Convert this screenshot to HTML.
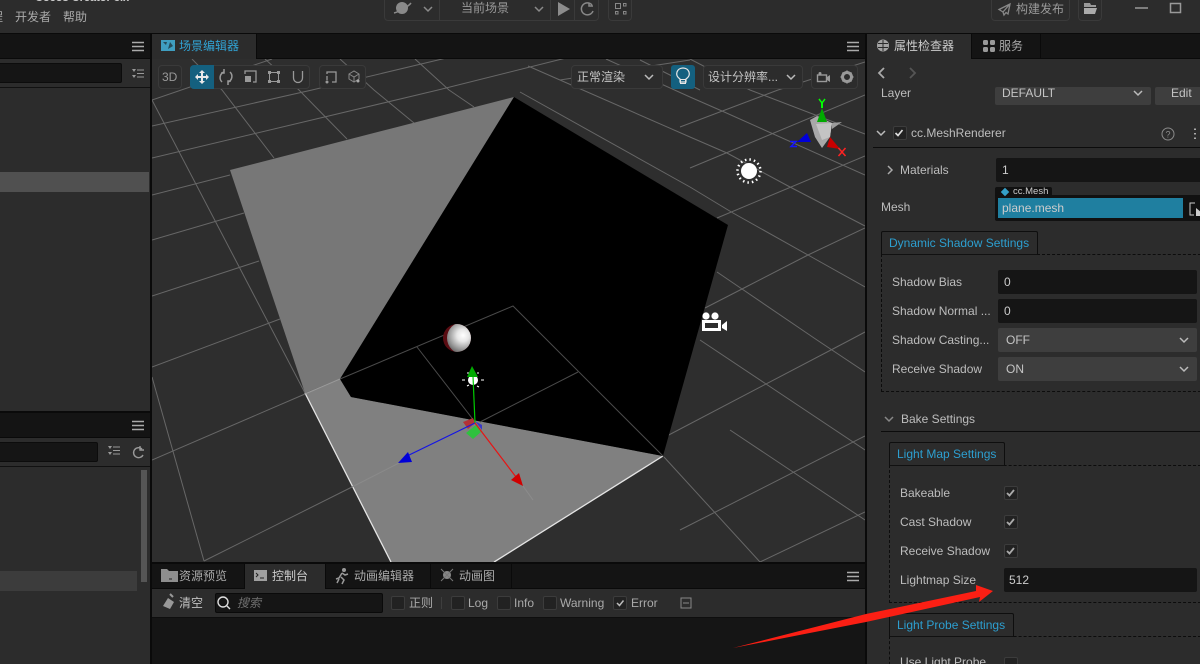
<!DOCTYPE html>
<html><head><meta charset="utf-8"><style>
*{box-sizing:border-box}
html,body{margin:0;padding:0;background:#2c2c2c}
#r{position:relative;width:1200px;height:664px;overflow:hidden;background:#2c2c2c;font:12px/16px "Liberation Sans","Noto Sans CJK SC",sans-serif;color:#bdbdbd}
.b{position:absolute}
.t{position:absolute;white-space:nowrap;line-height:16px}
.o{position:absolute;border:1px solid #3a3a3a;border-radius:4px}
.in{position:absolute;background:#151515;border-radius:2px}
.sel{position:absolute;background:#3e3e3e;border-radius:2px}
.tab{position:absolute;border:1px solid #0e0e0e;border-bottom:1px solid #111;color:#2d9fd0;padding-left:7px;line-height:22px;background:#2c2c2c;border-radius:2px 2px 0 0;white-space:nowrap}
.dash{position:absolute;border:1px dashed #0c0c0c;border-right:0}
.cb{position:absolute;width:14px;height:14px;background:#222;border:1px solid #3c3c3c;border-radius:2px}
svg{position:absolute;left:0;top:0;overflow:visible}
</style></head><body><div id="r">

<!-- top bar text -->
<div class="t" style="left:35px;top:-10px;color:#ccc;font-weight:bold;font-size:11px">Cocos Creator 3.x</div>
<div class="t" style="left:-9px;top:9px;color:#aaa">程</div>
<div class="t" style="left:15px;top:9px;color:#aaa">开发者</div>
<div class="t" style="left:63px;top:9px;color:#aaa">帮助</div>
<div class="o" style="left:384px;top:-6px;width:215px;height:27px"></div>
<div class="b" style="left:439px;top:0;width:1px;height:20px;background:#3a3a3a"></div>
<div class="b" style="left:550px;top:0;width:1px;height:20px;background:#3a3a3a"></div>
<div class="b" style="left:574px;top:0;width:1px;height:20px;background:#3a3a3a"></div>
<div class="t" style="left:461px;top:0;color:#999">当前场景</div>
<div class="o" style="left:608px;top:-6px;width:24px;height:27px"></div>
<div class="o" style="left:991px;top:-6px;width:79px;height:27px"></div>
<div class="t" style="left:1016px;top:1px;color:#999">构建发布</div>
<div class="o" style="left:1078px;top:-6px;width:24px;height:27px"></div>

<!-- frame dark lines -->
<div class="b" style="left:0;top:33px;width:1200px;height:1px;background:#0a0a0a"></div>

<!-- left panel -->
<div class="b" style="left:0;top:34px;width:150px;height:25px;background:#141414"></div>
<div class="b" style="left:0;top:58px;width:150px;height:1px;background:#0a0a0a"></div>
<div class="in" style="left:-4px;top:63px;width:126px;height:20px;border:1px solid #0c0c0c"></div>
<div class="b" style="left:0;top:87px;width:150px;height:1px;background:#111"></div>
<div class="b" style="left:0;top:172px;width:149px;height:20px;background:#505050"></div>
<div class="b" style="left:0;top:411px;width:150px;height:2px;background:#0a0a0a"></div>
<div class="b" style="left:0;top:413px;width:150px;height:24px;background:#141414"></div>
<div class="b" style="left:0;top:437px;width:150px;height:1px;background:#0a0a0a"></div>
<div class="in" style="left:-4px;top:442px;width:102px;height:20px;border:1px solid #0c0c0c"></div>
<div class="b" style="left:0;top:466px;width:150px;height:1px;background:#111"></div>
<div class="b" style="left:141px;top:470px;width:6px;height:112px;background:#555"></div>
<div class="b" style="left:0;top:571px;width:137px;height:20px;background:#3c3c3c"></div>
<div class="b" style="left:150px;top:34px;width:2px;height:630px;background:#0a0a0a"></div>

<!-- scene -->
<div class="b" style="left:152px;top:59px;width:713px;height:504px;background:#2e2e2e"></div>
<svg width="1200" height="664">
<defs>
<clipPath id="sc"><rect x="152" y="59" width="713" height="503"/></clipPath>
<clipPath id="sb"><circle cx="457" cy="338" r="14"/></clipPath>
<radialGradient id="sp" cx="0.5" cy="0.42" r="0.55"><stop offset="0" stop-color="#fff"/><stop offset="0.35" stop-color="#e6e6e6"/><stop offset="0.75" stop-color="#a0a0a0"/><stop offset="1" stop-color="#707070"/></radialGradient>
</defs>
<g clip-path="url(#sc)">
<g stroke="#676767" stroke-width="1" fill="none">
<!-- left family B -->
<path d="M152 100L272 59M152 126L312 90L480 50M152 158L438 90L590 52M152 195L230 175M152 240L244 213M152 296L259 261M152 367L280 319M152 460L305 394M204 561L352 487"/>
<!-- left family A -->
<path d="M131 60L152 100L305 393M192 59L222 90L274 158M265 59L299 90L347 139M340 59L374 90L414 123M415 59L449 90L474 107M152 377L204 561"/>
<!-- right family A -->
<path d="M690 59L750 90L865 134M606 59L690 97L722 111L865 175M528 66L690 137L727 153L790 187L865 226M520 92L690 187L733 213L808 255L865 287M717 272L742 289L817 340L865 372M700 340L865 450M664 457L760 562M730 430L865 520M640 60L700 90"/>
<!-- right family B -->
<path d="M680 127L778 90L865 62M690 168L865 95M717 218L865 156M705 308L742 289L808 255L865 228M663 438L850 340L865 332M680 530L865 436M760 562L865 512M560 80L690 60"/>
</g>
<!-- cube faces -->
<polygon points="514,97 230,170 305,393 340,379" fill="#777"/>
<polygon points="305,393 340,379 351,397 663,456 494,563 391,563" fill="#808080"/>
<polygon points="514,97 728,225 663,456 351,397 340,379" fill="#000"/>
<path d="M305 393L391 562" stroke="#e4e4e4" stroke-width="1.300" fill="none"/>
<path d="M663 456L494 562" stroke="#e4e4e4" stroke-width="1.300" fill="none"/>
<path d="M305 394L340 379" stroke="#9a9a9a" fill="none"/>
<path d="M352 487L399 463" stroke="#8a8a8a" fill="none"/>
<path d="M340 379L513 306L663 456M417 347L475 422M480 422L578 372" stroke="#4a4a4a" fill="none"/>
<path d="M523 486L533 500" stroke="#8c8c8c" fill="none"/>
<!-- sphere -->
<circle cx="457" cy="338" r="14" fill="#5a0c12"/>
<circle cx="463" cy="338" r="16" fill="url(#sp)" clip-path="url(#sb)"/>
<!-- light icon in center -->
<circle cx="473" cy="380" r="5" fill="#fff"/>
<path d="M462 380h3M481 380h3M467 386l2-1M477 386l2 1M467 373h3M477 373h2" stroke="#fff" stroke-width="1"/>
<!-- transform gizmo -->
<polygon points="463,422 473,418 475,423 468,429" fill="#b33236"/>
<polygon points="475,421 482,425 482,430" fill="#3838c8"/>
<polygon points="466,433 476,425 481,432 473,439" fill="#2fc13e"/>
<path d="M475 423L473 376" stroke="#0c0" stroke-width="1.200"/>
<path d="M475 423L405 457" stroke="#1414e6" stroke-width="1.200"/>
<path d="M475 423L516 477" stroke="#e61414" stroke-width="1.200"/>
<polygon points="472,366 467,377 478,377" fill="#0a0"/>
<polygon points="398,463 408,452 412,462" fill="#0000d8"/>
<polygon points="523,486 511,480 519,473" fill="#d00000"/>
<!-- sun -->
<circle cx="749" cy="171" r="8" fill="#fff"/>
<circle cx="749" cy="171" r="11.500" stroke="#fff" stroke-width="2.500" fill="none" stroke-dasharray="1.500 3.020"/>
<!-- camera -->
<circle cx="706" cy="316" r="3.600" fill="#fff"/><circle cx="715" cy="316" r="3.600" fill="#fff"/>
<path d="M702 320h19v11h-19zM705 323v5h13v-5z" fill="#fff" fill-rule="evenodd"/>
<polygon points="722,325 727,321 727,331 722,328" fill="#fff"/>
<!-- orientation gizmo -->
<polygon points="810,120 817,116 832,123 830,137 822,148 815,137" fill="#a8a8a8"/>
<polygon points="816,124 832,123 830,137 822,140" fill="#c4c4c4"/>
<polygon points="842,122 832,123 832,129" fill="#9c9c9c"/>
<polygon points="822,108 817,122 827,122" fill="#0a0"/>
<path d="M822 103V108" stroke="#0f0" stroke-width="2"/>
<polygon points="797,142 807,133 811,142" fill="#0000d8"/>
<polygon points="840,149 830,137 827,147" fill="#c80000"/>
<path d="M790 141.500h6l-5 5h6" fill="none" stroke="#1414ff" stroke-width="1.500"/>
<path d="M838.500 148l7 8M845.500 148l-7 8" stroke="#f22" stroke-width="1.500"/>
<path d="M819 99l3 4 3-4" stroke="#0f0" stroke-width="1.500" fill="none"/>
</g>
</svg>

<!-- scene header -->
<div class="b" style="left:152px;top:34px;width:713px;height:25px;background:#141414;border-bottom:1px solid #0a0a0a"></div>
<div class="b" style="left:152px;top:34px;width:105px;height:25px;background:#2c2c2c;border-right:1px solid #0a0a0a"></div>
<div class="b" style="left:161px;top:40px;width:14px;height:11px;background:#3f9ec0"></div>
<div class="t" style="left:179px;top:38px;color:#31a3d4">场景编辑器</div>
<div class="b" style="left:865px;top:34px;width:2px;height:630px;background:#0a0a0a"></div>

<!-- scene toolbar -->
<div class="o" style="left:158px;top:65px;width:24px;height:24px;background:#2c2c2c"></div>
<div class="t" style="left:162px;top:69px;color:#999">3D</div>
<div class="o" style="left:190px;top:65px;width:120px;height:24px;background:#2c2c2c"></div>
<div class="b" style="left:190px;top:65px;width:24px;height:24px;background:#14607f;border-radius:4px 0 0 4px"></div>
<div class="o" style="left:319px;top:65px;width:47px;height:24px;background:#2c2c2c"></div>
<div class="o" style="left:571px;top:65px;width:92px;height:24px;background:#2c2c2c"></div>
<div class="t" style="left:577px;top:69px;color:#c4c4c4">正常渲染</div>
<div class="b" style="left:671px;top:65px;width:24px;height:24px;background:#14607f;border-radius:3px"></div>
<div class="o" style="left:703px;top:65px;width:100px;height:24px;background:#2c2c2c"></div>
<div class="t" style="left:708px;top:69px;color:#c4c4c4">设计分辨率...</div>
<div class="o" style="left:811px;top:65px;width:47px;height:24px;background:#2c2c2c"></div>

<!-- console -->
<div class="b" style="left:152px;top:562px;width:713px;height:2px;background:#0a0a0a"></div>
<div class="b" style="left:152px;top:564px;width:713px;height:25px;background:#141414;border-bottom:1px solid #0a0a0a"></div>
<div class="b" style="left:244px;top:564px;width:82px;height:25px;background:#2c2c2c;border-left:1px solid #0a0a0a;border-right:1px solid #0a0a0a"></div>
<div class="b" style="left:430px;top:564px;width:1px;height:25px;background:#0a0a0a"></div>
<div class="b" style="left:511px;top:564px;width:1px;height:25px;background:#0a0a0a"></div>
<div class="t" style="left:179px;top:568px;color:#aaa">资源预览</div>
<div class="t" style="left:272px;top:568px;color:#ccc">控制台</div>
<div class="t" style="left:354px;top:568px;color:#aaa">动画编辑器</div>
<div class="t" style="left:459px;top:568px;color:#aaa">动画图</div>
<div class="b" style="left:152px;top:589px;width:713px;height:29px;background:#2c2c2c;border-bottom:1px solid #0e0e0e"></div>
<div class="b" style="left:152px;top:618px;width:713px;height:46px;background:#151515"></div>
<div class="t" style="left:179px;top:595px;color:#c0c0c0">清空</div>
<div class="in" style="left:215px;top:593px;width:168px;height:20px;border:1px solid #0a0a0a"></div>
<div class="t" style="left:237px;top:595px;color:#707070;font-style:italic">搜索</div>
<div class="cb" style="left:391px;top:596px"></div>
<div class="t" style="left:409px;top:595px;color:#aaa">正则</div>
<div class="b" style="left:441px;top:597px;width:1px;height:12px;background:#3e3e3e"></div>
<div class="cb" style="left:451px;top:596px"></div>
<div class="t" style="left:468px;top:595px;color:#aaa">Log</div>
<div class="cb" style="left:497px;top:596px"></div>
<div class="t" style="left:514px;top:595px;color:#aaa">Info</div>
<div class="cb" style="left:543px;top:596px"></div>
<div class="t" style="left:560px;top:595px;color:#aaa">Warning</div>
<div class="cb" style="left:613px;top:596px"></div>
<div class="t" style="left:631px;top:595px;color:#aaa">Error</div>

<!-- right panel -->
<div class="b" style="left:867px;top:34px;width:333px;height:25px;background:#141414;border-bottom:1px solid #0a0a0a"></div>
<div class="b" style="left:867px;top:34px;width:105px;height:25px;background:#2c2c2c;border-right:1px solid #0a0a0a"></div>
<div class="b" style="left:972px;top:34px;width:69px;height:25px;border-right:1px solid #0a0a0a"></div>
<div class="t" style="left:894px;top:38px;color:#ccc">属性检查器</div>
<div class="t" style="left:999px;top:38px;color:#aaa">服务</div>

<div class="sel" style="left:995px;top:87px;width:156px;height:18px"></div>
<div class="sel" style="left:1155px;top:87px;width:50px;height:18px"></div>
<div class="b" style="left:867px;top:59px;width:333px;height:28px;background:#2c2c2c"></div>
<div class="t" style="left:881px;top:85px;color:#bdbdbd">Layer</div>
<div class="t" style="left:1002px;top:85px;color:#c4c4c4">DEFAULT</div>
<div class="t" style="left:1171px;top:85px;color:#c4c4c4">Edit</div>

<div class="cb" style="left:893px;top:126px;background:#222"></div>
<div class="t" style="left:911px;top:125px;color:#bdbdbd">cc.MeshRenderer</div>
<div class="b" style="left:873px;top:147px;width:327px;height:1px;background:#0c0c0c"></div>
<div class="t" style="left:900px;top:162px">Materials</div>
<div class="in" style="left:996px;top:158px;width:210px;height:24px"></div>
<div class="t" style="left:1002px;top:162px;color:#ccc">1</div>
<div class="t" style="left:881px;top:199px">Mesh</div>
<div class="b" style="left:995px;top:187px;width:57px;height:10px;background:#111;border-radius:2px 2px 0 0"></div>
<div class="b" style="left:995px;top:195px;width:210px;height:26px;background:#111;border-radius:2px"></div>
<div class="b" style="left:998px;top:198px;width:185px;height:20px;background:#1f7fa0"></div>
<div class="t" style="left:1013px;top:185px;font-size:9.500px;line-height:14px;color:#ccc">cc.Mesh</div>
<div class="b" style="left:1002px;top:189px;width:6px;height:6px;background:#35a0c8;transform:rotate(45deg)"></div>
<div class="t" style="left:1002px;top:200px;color:#ccc">plane.mesh</div>

<div class="dash" style="left:881px;top:254px;width:325px;height:138px"></div>
<div class="tab" style="left:881px;top:231px;width:157px;height:24px">Dynamic Shadow Settings</div>
<div class="t" style="left:892px;top:274px">Shadow Bias</div>
<div class="in" style="left:998px;top:270px;width:199px;height:24px"></div>
<div class="t" style="left:1004px;top:274px;color:#ccc">0</div>
<div class="t" style="left:892px;top:303px">Shadow Normal ...</div>
<div class="in" style="left:998px;top:299px;width:199px;height:24px"></div>
<div class="t" style="left:1004px;top:303px;color:#ccc">0</div>
<div class="t" style="left:892px;top:332px">Shadow Casting...</div>
<div class="sel" style="left:998px;top:328px;width:199px;height:24px"></div>
<div class="t" style="left:1006px;top:332px;color:#c4c4c4">OFF</div>
<div class="t" style="left:892px;top:361px">Receive Shadow</div>
<div class="sel" style="left:998px;top:357px;width:199px;height:24px"></div>
<div class="t" style="left:1006px;top:361px;color:#c4c4c4">ON</div>

<div class="t" style="left:901px;top:411px">Bake Settings</div>
<div class="b" style="left:881px;top:431px;width:319px;height:1px;background:#0c0c0c"></div>

<div class="dash" style="left:889px;top:465px;width:317px;height:138px"></div>
<div class="tab" style="left:889px;top:442px;width:116px;height:24px">Light Map Settings</div>
<div class="t" style="left:900px;top:485px">Bakeable</div>
<div class="cb" style="left:1004px;top:486px"></div>
<div class="t" style="left:900px;top:514px">Cast Shadow</div>
<div class="cb" style="left:1004px;top:515px"></div>
<div class="t" style="left:900px;top:543px">Receive Shadow</div>
<div class="cb" style="left:1004px;top:544px"></div>
<div class="t" style="left:900px;top:572px">Lightmap Size</div>
<div class="in" style="left:1004px;top:568px;width:193px;height:24px"></div>
<div class="t" style="left:1009px;top:572px;color:#ccc">512</div>

<div class="dash" style="left:889px;top:636px;width:317px;height:60px"></div>
<div class="tab" style="left:889px;top:613px;width:125px;height:24px">Light Probe Settings</div>
<div class="t" style="left:900px;top:654px">Use Light Probe</div>
<div class="cb" style="left:1004px;top:657px"></div>

<!-- icons overlay -->
<svg width="1200" height="664" fill="none">
<!-- top bar icons -->
<ellipse cx="402" cy="8" rx="6" ry="6" fill="#8a8a8a"/>
<path d="M394 13C398 12 408 7 411 3" stroke="#8a8a8a" stroke-width="1.500"/>
<path d="M424 7l4 4 4-4M535 7l4 4 4-4" stroke="#8a8a8a" stroke-width="1.500"/>
<polygon points="558,2 558,16 570,9" fill="#8c8c8c"/>
<path d="M592 5A6 6 0 1 0 593 11M589 2.500V6H593" stroke="#888" stroke-width="1.500"/>
<path d="M615.500 3.500h5v5h-5zM615.500 11.500h2.500v2.500h-2.500zM623.500 11.500h2.500v2.500h-2.500zM623.500 3.500h2.500v2.500h-2.500z" stroke="#888" stroke-width="1"/>
<path d="M1010 4L999 9.500L1003 12L1004 15L1006 12.500L1008 14ZM1003 12L1010 4" stroke="#888" stroke-width="1.300"/>
<path d="M1084 3h6l1 2h5v2h-12z" fill="#999"/><polygon points="1084,8 1097,8 1095,14 1084,14" fill="#aaa"/>
<path d="M1135 8h13" stroke="#999" stroke-width="1.500"/>
<rect x="1170.500" y="3.500" width="10" height="9" stroke="#999" stroke-width="1.500"/>

<!-- hamburgers -->
<path d="M132 42.500h12M132 46.500h12M132 50.500h12M132 421.500h12M132 425.500h12M132 429.500h12M847 42.500h12M847 46.500h12M847 50.500h12M847 572.500h12M847 576.500h12M847 580.500h12" stroke="#aaa" stroke-width="1.600"/>
<!-- list icons -->
<path d="M137 70h7M137 73.500h7M137 77h7M113 447h7M113 450.500h7M113 454h7" stroke="#999"/>
<path d="M132 69h4l-2 3zM132 75h4l-2 3zM108 446h4l-2 3zM108 452h4l-2 3z" fill="#999"/>
<path d="M142 449A5 5 0 1 0 143 455M140 446V450H144" stroke="#999" stroke-width="1.400"/>
<!-- scene tab icon -->
<path d="M163 42l4 0-1 3zM170 42l3 4-5 3z" fill="#141414" opacity=".6"/>
<!-- transform tools -->
<path d="M196 77h12M202 71v12" stroke="#e8e8e8" stroke-width="2"/>
<path d="M195 77l3-3v6zM209 77l-3-3v6zM202 70l-3 3h6zM202 84l-3-3h6z" fill="#e8e8e8"/>
<path d="M222 82A6 6 0 0 1 224 72M230 72A6 6 0 0 1 228 82M224 69v4h-3M228 85v-4h3" stroke="#999" stroke-width="1.500"/>
<rect x="245" y="76" width="6" height="6" fill="#999"/>
<path d="M245 74v-3h11v11h-3" stroke="#999" stroke-width="1.300"/>
<rect x="269.500" y="72.500" width="9" height="9" stroke="#999"/>
<path d="M268 71h3v3h-3zM277 71h3v3h-3zM268 80h3v3h-3zM277 80h3v3h-3z" fill="#999"/>
<path d="M293.500 71v7a4.500 4.500 0 0 0 9 0v-7" stroke="#999" stroke-width="1.300"/>
<path d="M327 74v-2h9v10h-4M327 76v4" stroke="#999" stroke-width="1.300"/>
<circle cx="327" cy="82" r="1.500" fill="#999"/>
<path d="M349 74l5-3 5 3v5l-5 3-5-3zM349 74l5 3 5-3M354 77v5" stroke="#888"/>
<circle cx="358" cy="81" r="1.500" fill="#aaa"/>
<!-- selects chevrons -->
<path d="M645 75l4 4 4-4M787 75l4 4 4-4" stroke="#bbb" stroke-width="1.500"/>
<!-- bulb -->
<path d="M680 82v-3c-6-4-3-11 3-11s9 7 3 11v3z" stroke="#e6e6e6" stroke-width="1.200"/>
<rect x="680.500" y="79.500" width="5" height="4" stroke="#e6e6e6"/>
<!-- camera/gear -->
<rect x="817.500" y="75" width="9" height="6.500" stroke="#999" stroke-width="1.400"/>
<path d="M827 77l3-2v7l-3-2z" fill="#999"/>
<circle cx="820" cy="73.500" r="1.500" fill="#999"/>
<circle cx="847" cy="77" r="4.500" stroke="#999" stroke-width="3"/>
<path d="M847 70.500v13M840.500 77h13M842.500 72.500l9 9M851.500 72.500l-9 9" stroke="#999" stroke-width="1.500" stroke-dasharray="2 9"/>
<!-- console icons -->
<path d="M161 569h6l2 2h9v11h-17z" fill="#8e8e8e"/>
<path d="M169 579h3" stroke="#222"/>
<rect x="254" y="570" width="13" height="11" fill="#a0a0a0"/>
<path d="M256 573l2 2-2 2M260 578h4" stroke="#222"/>
<circle cx="344" cy="570" r="2" fill="#999"/>
<path d="M342 573l-3 5-3 1M342 573l3 2 3-1M341 577l3 3-2 4M339 579l-2 4" stroke="#999" stroke-width="1.500"/>
<circle cx="447" cy="575" r="4" fill="#888"/>
<path d="M441 569l12 12M453 569l-12 12" stroke="#777"/>
<polygon points="168,598 174,602 170,609 163,606" fill="#999"/>
<path d="M170 594l3 3" stroke="#999" stroke-width="2"/>
<circle cx="223" cy="602" r="5" stroke="#ddd" stroke-width="1.400"/>
<path d="M227 606l3 3" stroke="#ddd" stroke-width="1.400"/>
<path d="M617 603l2.500 2.500 4-5" stroke="#bbb" stroke-width="1.500"/>
<path d="M681 598h10v10h-10zM683 603h6" stroke="#888"/>
<!-- right panel icons -->
<circle cx="883" cy="45.500" r="6" fill="#a4a4a4"/>
<path d="M878 43.500h10M878 47.500h10M883 40v11" stroke="#2c2c2c"/>
<rect x="983" y="40" width="5" height="5" rx="1.500" fill="#999"/><rect x="990" y="40" width="5" height="5" rx="1.500" fill="#999"/><rect x="983" y="47" width="5" height="5" rx="1.500" fill="#999"/><rect x="990" y="47" width="5" height="5" rx="1.500" fill="#999"/>
<path d="M884 68l-5 5 5 5" stroke="#aaa" stroke-width="1.800"/>
<path d="M910 68l5 5-5 5" stroke="#555" stroke-width="1.800"/>
<path d="M1134 91l4 4 4-4M877 131l4 4 4-4" stroke="#bbb" stroke-width="1.500"/>
<path d="M895.500 133l2.500 2.500 4.500-5.500" stroke="#ddd" stroke-width="1.700"/>
<circle cx="1168" cy="134" r="6" stroke="#8a8a8a"/>
<text x="1165.500" y="137.500" font-size="9" fill="#8a8a8a" font-family="Liberation Sans">?</text>
<path d="M1195 128.500v1.500M1195 133v1.500M1195 137.500v1.500" stroke="#aaa" stroke-width="2"/>
<path d="M888 166l4 4-4 4" stroke="#aaa" stroke-width="1.500"/>
<path d="M1195 203h-5v12h4" stroke="#ccc"/>
<polygon points="1196,208 1201,212 1201,216 1196,216" fill="#ccc"/>
<path d="M1180 338l4 4 4-4M1180 367l4 4 4-4" stroke="#bbb" stroke-width="1.500"/>
<path d="M885 417l4 4 4-4" stroke="#888" stroke-width="1.500"/>
<path d="M1007 493l2.500 2.500 4.500-5.500M1007 522l2.500 2.500 4.500-5.500M1007 551l2.500 2.500 4.500-5.500" stroke="#aaa" stroke-width="1.800"/>
<!-- red arrow -->
<polygon points="733,648 866,614 976,591 976,585 993,591 979,602 980,597 866,622" fill="#fb1f14"/>
</svg>

</div></body></html>
